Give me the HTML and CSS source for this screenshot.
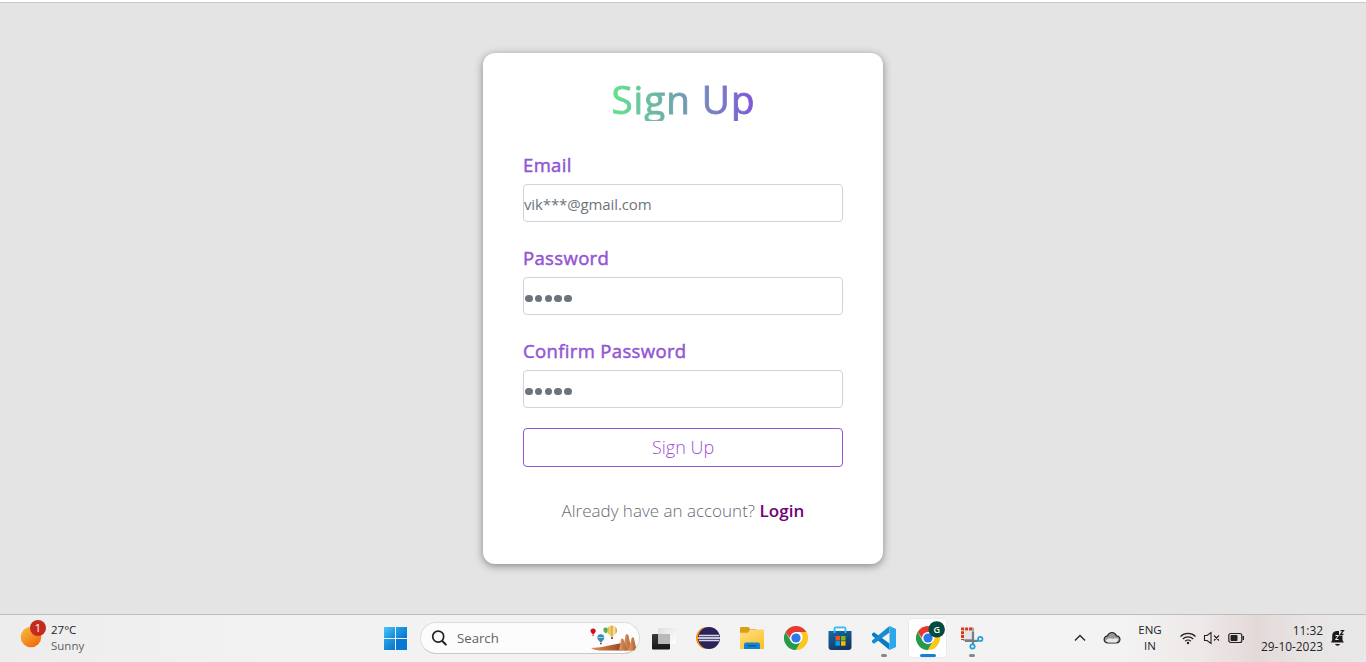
FILE: index.html
```html
<!DOCTYPE html>
<html lang="en">
<head>
<meta charset="utf-8">
<title>Sign Up</title>
<link rel="stylesheet" href="styles.css">
</head>
<body>
<main class="page">
  <form class="card">
    <h1 class="title">Sign Up</h1>
    <div class="field">
      <label class="label">Email</label>
      <div class="input email">vik***@gmail.com</div>
    </div>
    <div class="field">
      <label class="label">Password</label>
      <div class="input dots"><i></i><i></i><i></i><i></i><i></i></div>
    </div>
    <div class="field">
      <label class="label">Confirm Password</label>
      <div class="input dots"><i></i><i></i><i></i><i></i><i></i></div>
    </div>
    <button class="submit" type="button">Sign Up</button>
    <p class="account"><span class="question">Already have an account?</span> <a class="login">Login</a></p>
  </form>
</main>
<footer class="taskbar">
  <div class="weather">
    <svg width="32" height="32" viewBox="0 0 32 32">
      <defs><linearGradient id="sun" x1="0" y1="0" x2=".7" y2="1"><stop offset="0" stop-color="#f6c443"/><stop offset="1" stop-color="#f06a0c"/></linearGradient></defs>
      <circle cx="15" cy="17" r="10.3" fill="url(#sun)"/>
      <circle cx="22" cy="8" r="8" fill="#c42b1c"/>
      <text x="22" y="12.2" text-anchor="middle" class="badge">1</text>
    </svg>
    <div class="forecast"><span>27°C</span><span class="muted">Sunny</span></div>
  </div>
  <nav class="apps">
    <span class="app start">
      <svg width="24" height="24" viewBox="0 0 24 24">
        <defs><linearGradient id="win" x1="0" y1="0" x2="1" y2="1"><stop offset="0" stop-color="#4bc8fb"/><stop offset="1" stop-color="#0f86d7"/></linearGradient>
        <linearGradient id="win2" x1="0" y1="0" x2="1" y2="1"><stop offset="0" stop-color="#25a5ea"/><stop offset="1" stop-color="#0873cb"/></linearGradient></defs>
        <path d="M0 1h11v11H0z" fill="url(#win)"/><path d="M12 1h11v11H12z" fill="url(#win2)"/><path d="M0 13h11v11H0z" fill="url(#win2)"/><path d="M12 13h11v11H12z" fill="#0878d3"/>
      </svg>
    </span>
    <div class="search">
      <svg width="18" height="18" viewBox="0 0 18 18" fill="none" stroke="#222" stroke-width="1.7" stroke-linecap="round"><circle cx="7.2" cy="7.6" r="5.5"/><path d="M11.3 12l3.5 3.5" stroke-width="2"/></svg>
      <span class="search-text">Search</span>
      <svg class="scene" width="48" height="28" viewBox="0 0 48 28">
        <defs><linearGradient id="rock" x1="0" y1="0" x2="1" y2="0"><stop offset="0" stop-color="#d99360"/><stop offset=".55" stop-color="#b8693b"/><stop offset="1" stop-color="#914620"/></linearGradient>
        <linearGradient id="cliff" x1="0" y1="0" x2="1" y2="0"><stop offset="0" stop-color="#e39a68"/><stop offset="1" stop-color="#b0602f"/></linearGradient>
        <linearGradient id="yel" x1="0" x2="1"><stop offset="0" stop-color="#dca92b"/><stop offset=".3" stop-color="#f4d878"/><stop offset=".5" stop-color="#d7a537"/><stop offset=".7" stop-color="#fff0b8"/><stop offset="1" stop-color="#c7922d"/></linearGradient></defs>
        <path d="M2 23Q12 22.500 20 20.500L33 18v7.500H11Q5 25 2 23z" fill="url(#rock)"/>
        <path d="M34 25.500l2.500-15q1.500-3 3 0l3 15z" fill="url(#cliff)"/>
        <path d="M30 25.500l2-11q1.200-2 2.500 0l4 11z" fill="url(#cliff)"/>
        <path d="M39.500 25.500l3-12q1.300-2.500 2.500 0l2 9-1.500 3z" fill="url(#cliff)"/>
        <path d="M1.500 6a2.600 2.600 0 1 1 5.200 0c0 1.400-1.200 2-2.100 3.500h-1C3 8.100 1.500 7.500 1.500 6z" fill="#d50f18"/><path d="M3.500 10.500h1.200" stroke="#5b4538"/>
        <path d="M14.300 5a2.400 2.400 0 1 1 4.800 0c0 1.400-1.200 2.200-1.900 3.300h-1C15.700 7.200 14.300 6.500 14.300 5z" fill="#48b757"/>
        <path d="M18 5.500a5 5 0 1 1 10 0c0 3-2.500 4-4 6.300h-2C20.500 9.500 18 8.500 18 5.500z" fill="url(#yel)"/><path d="M22 12.300h2V14h-2z" fill="#745028"/>
        <path d="M8.300 12.700a3.500 3.500 0 1 1 7 0c0 2-1.600 2.600-2.700 4.500h-1.500C10.100 15.300 8.300 14.800 8.300 12.700z" fill="#3889b8"/><path d="M8.600 12.500h6.400" stroke="#9acce5"/><path d="M11 18.500h1.700" stroke="#6d5036" stroke-width="1.300"/>
      </svg>
    </div>
    <span class="app">
      <svg width="26" height="26" viewBox="0 0 26 26"><defs><linearGradient id="dark" x1="0" y1="0" x2="0" y2="1"><stop offset="0" stop-color="#3b3b3b"/><stop offset="1" stop-color="#151515"/></linearGradient><linearGradient id="glass" x2="1" y2="1"><stop offset="0" stop-color="#dedede"/><stop offset="1" stop-color="#fff"/></linearGradient></defs><rect x="1" y="9" width="18" height="15.500" rx="1" fill="url(#dark)"/><rect x="7" y="3" width="18" height="16" rx="1" fill="url(#glass)"/><path d="M7 9h12v10H7z" fill="#b9b9b9"/></svg>
    </span>
    <span class="app">
      <svg width="26" height="26" viewBox="0 0 26 26"><defs><clipPath id="orb"><circle cx="14" cy="13" r="11"/></clipPath></defs><circle cx="12" cy="13" r="11" fill="#f59218"/><circle cx="14" cy="13" r="11" fill="#2a235b"/><g clip-path="url(#orb)" stroke="#d8d5e8" stroke-width="1.600"><path d="M4 10.500h20M4 15.500h20"/><path d="M3 13h22" stroke="#fff"/></g></svg>
    </span>
    <span class="app">
      <svg width="26" height="26" viewBox="0 0 26 26"><defs><linearGradient id="folder" x2=".7" y2="1"><stop offset="0" stop-color="#ffe08b"/><stop offset="1" stop-color="#fac22a"/></linearGradient></defs><path d="M1 3.300Q1 2 2.300 2h7l2 2h6v5H1z" fill="#dba011"/><path d="M1 7.700h8L11.300 4.500H24q1 0 1 1V24H1z" fill="url(#folder)"/><path d="M5 24v-4.500q0-2 2-2h12q2 0 2 2V24z" fill="#1683cf"/><path d="M8.500 20.800h9" stroke="#075b9e" stroke-width="1.400"/></svg>
    </span>
    <span class="app">
      <svg width="24" height="24" viewBox="0 0 24 24"><path d="M1.600 6A12 12 0 0 1 22.400 6H12L8 15z" fill="#e33b2e"/><path d="M1.600 6A12 12 0 0 0 12 24l5.200-9-5.200 3L6.800 15z" fill="#279b49"/><path d="M22.400 6A12 12 0 0 1 12 24l5.200-9a6 6 0 0 0-1-9z" fill="#fdc719"/><circle cx="12" cy="12" r="6" fill="#fff"/><circle cx="12" cy="12" r="4.600" fill="#2d77ea"/></svg>
    </span>
    <span class="app">
      <svg width="26" height="26" viewBox="0 0 26 26"><defs><linearGradient id="bag" y2="1" x2=".5"><stop offset="0" stop-color="#126cac"/><stop offset="1" stop-color="#173761"/></linearGradient></defs><path d="M1.500 6h23v16q0 3-3 3h-17q-3 0-3-3z" fill="url(#bag)"/><path d="M7.500 8V3.500q0-1.200 1.200-1.200h8.600q1.200 0 1.200 1.200V8" fill="none" stroke="#2fc0ef" stroke-width="1.800"/><path d="M8.500 11H13v4.500H8.500z" fill="#f25022"/><path d="M14 11h4.500v4.500H14z" fill="#7fba00"/><path d="M8.500 16.200H13v4.500H8.500z" fill="#00a4ef"/><path d="M14 16.200h4.500v4.500H14z" fill="#ffb900"/></svg>
    </span>
    <span class="app">
      <svg width="26" height="26" viewBox="0 0 26 26"><path d="M1 8.800l2-1.500L18.500 18.500V25L1 10.500z" fill="#087cc2"/><path d="M1 17.200l2 1.500L18.500 7.500V1L1 15.500z" fill="#168bd1"/><path d="M18.500 1L25 4v18l-6.500 3z" fill="#2da7eb"/></svg>
      <b class="mark"></b>
    </span>
    <span class="app">
      <span class="tile"></span>
      <svg class="front" width="32" height="32" viewBox="0 0 32 32"><g transform="translate(2 5)"><path d="M1.600 6A12 12 0 0 1 22.400 6H12L8 15z" fill="#e33b2e"/><path d="M1.600 6A12 12 0 0 0 12 24l5.200-9-5.200 3L6.800 15z" fill="#279b49"/><path d="M22.400 6A12 12 0 0 1 12 24l5.200-9a6 6 0 0 0-1-9z" fill="#fdc719"/><circle cx="12" cy="12" r="6" fill="#fff"/><circle cx="12" cy="12" r="4.600" fill="#2d77ea"/></g><circle cx="22.700" cy="8.400" r="8.200" fill="#024c3f"/><text x="22.700" y="11.600" text-anchor="middle" class="profile">G</text></svg>
      <b class="mark active"></b>
    </span>
    <span class="app">
      <svg width="26" height="26" viewBox="0 0 26 26" fill="none"><path d="M5 6h9v9H5z" fill="#e4e4e4"/><path d="M12 3.500h2V15H4" stroke="#a4a8aa" stroke-width="2"/><path d="M13 4H3.500v11" stroke="#d83b16" stroke-width="3" stroke-dasharray="3 .9"/><path d="M14 7v12M6 15.800h13" stroke="#777e83" stroke-width="2.200"/><circle cx="21.300" cy="14" r="2.200" stroke="#20a2df" stroke-width="1.700"/><circle cx="13.500" cy="21.500" r="2.200" stroke="#20a2df" stroke-width="1.700"/></svg>
      <b class="mark"></b>
    </span>
  </nav>
  <div class="tray">
    <svg class="chevron" width="12" height="8" viewBox="0 0 12 8" fill="none" stroke="#222" stroke-width="1.300"><path d="M1 6.500l5-5 5 5"/></svg>
    <svg class="cloud" width="18" height="14" viewBox="0 0 18 14"><path d="M5 12a3.600 3.600 0 0 1-.5-7.200Q6 1.500 9 1.500t4.500 3.400a3.500 3.500 0 0 1-.2 7.100z" fill="#999" stroke="#222" stroke-width="1.200"/><path d="M2.500 9.500q4-3.500 7-1.500 3-1.500 6 0l-2 3.400H5z" fill="#e8e8e8"/></svg>
    <div class="lang"><span>ENG</span><span>IN</span></div>
    <svg class="wifi" width="18" height="14" viewBox="0 0 18 14" fill="none" stroke="#222" stroke-width="1.200"><path d="M1.500 5.500a10.600 10.600 0 0 1 15 0M3.800 8a7.300 7.300 0 0 1 10.400 0M6.200 10.300a4 4 0 0 1 5.600 0"/><circle cx="9" cy="12" r="1.200" fill="#222" stroke="none"/></svg>
    <svg class="sound" width="18" height="14" viewBox="0 0 18 14" fill="none" stroke="#222" stroke-width="1.100"><path d="M1.500 4.500h2.500l4-3v11l-4-3H1.500zM11 4.500l5 5m0-5l-5 5"/></svg>
    <svg class="battery" width="17" height="12" viewBox="0 0 17 12" fill="none" stroke="#222"><rect x=".8" y="1.500" width="13" height="9" rx="2" stroke-width="1.200"/><path d="M3 3.500h6v5H3z" fill="#222"/><path d="M15.300 4v4" stroke-width="1.400"/></svg>
    <div class="clock"><span>11:32</span><span>29-10-2023</span></div>
    <svg class="bell" width="16" height="18" viewBox="0 0 16 18"><path d="M1 13.500L2.200 11V7q0-4.500 4.300-5H9v4.500h3.500V11l1.300 2.500z" fill="#1c1c1c"/><path d="M5 15h5q-.5 1.800-2.500 1.800T5 15z" fill="#1c1c1c"/><path d="M5.500 6.500h3L5.500 10.500h3" fill="none" stroke="#f4f4f4"/><path d="M10.500 1.700h3L10.500 5.300h3" fill="none" stroke="#1c1c1c" stroke-width="1.200"/></svg>
  </div>
</footer>
</body>
</html>
```
FILE: styles.css
```css
* { box-sizing: border-box; }
body { margin: 0; width: 1366px; height: 662px; overflow: hidden; display: flex; flex-direction: column; font-family: "Open Sans", "Noto Sans", sans-serif; color: #212529; }
.page { height: 614px; flex: none; padding-top: 50px; background: #e4e4e4; border-top: 3px solid #cacaca; border-image: linear-gradient(#fff 0 2px, #cacaca 2px) 3; }
.card { width: 400px; height: 511px; margin: 0 auto; padding: 28px 40px; background: #fff; border-radius: 12px; box-shadow: 0 2px 9px rgba(0,0,0,.42); }
.title { margin: 0 auto 30px; width: 143px; height: 40px; line-height: 36px; font-size: 38.500px; font-weight: 400; white-space: nowrap; letter-spacing: 1px; color: transparent; -webkit-text-stroke: .9px transparent; background: linear-gradient(90deg, #63e28d, #7f56d9); background-clip: text; -webkit-background-clip: text; }
.field { height: 93px; }
.label { display: block; height: 33px; line-height: 28px; font-size: 18.500px; font-weight: 400; letter-spacing: .35px; -webkit-text-stroke: .5px #9356d3; color: #9356d3; white-space: nowrap; }
.input { height: 38px; line-height: 38px; border: 1px solid #ced4da; border-radius: 4px; font-size: 15px; color: #6c757d; }
.email { letter-spacing: -.12px; }
.dots { display: flex; gap: 2.300px; padding: 16.500px 0 0 1px; }
.dots i { width: 7.500px; height: 7.500px; border-radius: 50%; background: #6c757d; }
.submit { display: block; width: 320px; height: 39px; margin-top: -2px; padding: 0; background: #fff; border: 1px solid #9356d3; border-radius: 4px; font: 300 18px/37px "Open Sans", sans-serif; color: #a04fd5; }
.account { margin: 31px 0 0; line-height: 26px; text-align: center; font-size: 17px; font-weight: 300; white-space: nowrap; color: #666b76; }
.login { font-weight: 600; letter-spacing: .1px; color: #720078; }
.taskbar { height: 48px; flex: none; display: flex; align-items: center; border-top: 1px solid #bdbdbd; background: linear-gradient(90deg, #ededed, #f2f2f2 20%, #f3f3f3 82%, #eee8e8 88%, #e4d9d9 92%, #e9e5e5 96%, #e8e8e8); font-size: 11.500px; line-height: 16px; }
.weather { width: 373px; flex: none; display: flex; gap: 3px; padding: 0 0 2px 16px; }
.weather svg { margin-top: -2px; }
.forecast, .lang, .clock { display: flex; flex-direction: column; }
.muted { color: #606060; }
.badge { font-size: 11px; fill: #fff; }
.apps { display: flex; align-items: center; width: 622px; flex: none; padding: 0 0 2px 1px; }
.app { width: 44px; height: 45px; flex: none; position: relative; display: flex; align-items: center; justify-content: center; }
.search { width: 220px; height: 32px; flex: none; margin: 0 2px 0 2px; padding: 0 2px 0 10px; border: 1px solid #ddd; border-bottom-color: #c8c8c8; border-radius: 16px; background: #fcfcfc; display: flex; align-items: center; }
.search-text { font-size: 13.200px; color: #626262; margin-left: 8px; }
.scene { margin: 3px 0 0 auto; }
.mark { position: absolute; bottom: 3px; left: 19px; width: 6px; height: 3px; border-radius: 2px; background: #888; }
.mark.active { left: 14px; width: 16px; background: #1680d5; }
.tile { position: absolute; inset: 3px 3px 2px 2px; border: 1px solid #eaeaea; border-radius: 4px; background: #fff; }
.front { position: relative; margin: -2px 0 0 3px; }
.profile { font-size: 9px; font-weight: 600; fill: #fff; }
.tray { display: flex; align-items: center; flex: none; padding: 0 0 2px 79px; }
.chevron { margin-right: 17px; }
.cloud { margin-right: 17px; }
.lang { width: 24px; align-items: center; margin: 1px 17px 0 0; }
.wifi { margin-right: 6px; }
.sound { margin-right: 7px; }
.battery { margin-right: 5px; }
.clock { width: 73px; align-items: flex-end; margin-right: 7px; white-space: nowrap; font-size: 11.900px; }
```
